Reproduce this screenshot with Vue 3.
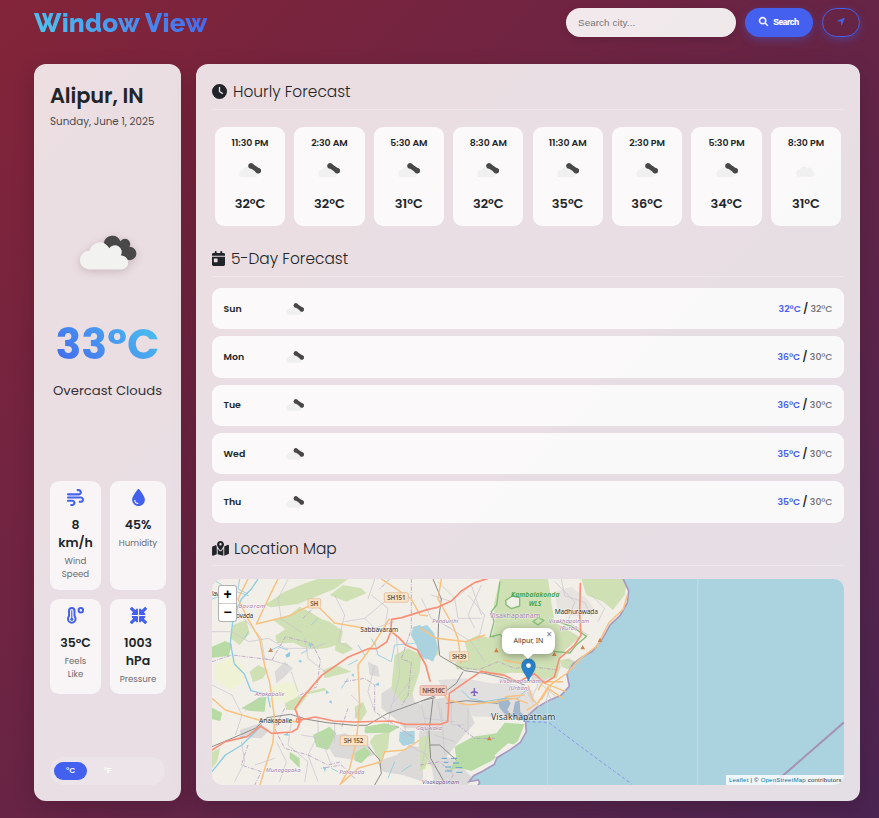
<script setup>
const hours = [
  { time: '11:30 PM', temp: '32°C' },
  { time: '2:30 AM', temp: '32°C' },
  { time: '5:30 AM', temp: '31°C' },
  { time: '8:30 AM', temp: '32°C' },
  { time: '11:30 AM', temp: '35°C' },
  { time: '2:30 PM', temp: '36°C' },
  { time: '5:30 PM', temp: '34°C' },
  { time: '8:30 PM', temp: '31°C', light: true },
]
const days = [
  { name: 'Sun', max: '32°C', min: '32°C' },
  { name: 'Mon', max: '36°C', min: '30°C' },
  { name: 'Tue', max: '36°C', min: '30°C' },
  { name: 'Wed', max: '35°C', min: '30°C' },
  { name: 'Thu', max: '35°C', min: '30°C' },
]
const quarter = [0, 90, 180, 270]
</script>

<template>
  <div class="page">
    <svg class="defs" width="0" height="0">
      <defs>
        <symbol id="cloud" viewBox="147 74 175 107">
          <path fill="#484848" d="M222 100a26 26 0 0 1 50-5a15 15 0 0 1 27 17a20 20 0 1 1-11 36l-60-40z" />
          <path fill="#f2f2f0" d="M176 180a28 28 0 1 1 3-56a31 31 0 0 1 59-7a20 20 0 0 1 35 21a21 21 0 1 1 3 42z" />
        </symbol>
        <symbol id="minicloud" viewBox="147 74 175 115">
          <path fill="#f0f0f0" d="M176 188a28 28 0 1 1 3-56a31 31 0 0 1 59-7a20 20 0 0 1 35 21a21 21 0 1 1 3 42z" />
          <path fill="none" stroke="#484848" stroke-width="38" stroke-linecap="round" d="M243 95l58 41" />
          <circle cx="243" cy="97" r="22" fill="#484848" />
          <circle cx="300" cy="136" r="22" fill="#484848" />
        </symbol>
        <symbol id="lightcloud" viewBox="147 88 151 93">
          <path fill="#f0f0f0" d="M176 180a28 28 0 1 1 3-56a31 31 0 0 1 59-7a20 20 0 0 1 35 21a21 21 0 1 1 3 42z" />
        </symbol>
      </defs>
    </svg>

    <header class="header">
      <h1 class="logo">Window View</h1>
      <div class="search">
        <input class="search-input" type="text" placeholder="Search city..." />
        <button class="btn btn-primary">
          <svg class="i-search" viewBox="0 0 512 512"><path fill="currentColor" stroke="currentColor" stroke-width="24" d="M416 208c0 45.9-14.9 88.3-40 122.7L502.6 457.4c12.5 12.5 12.5 32.8 0 45.3s-32.8 12.5-45.3 0L330.7 376c-34.4 25.2-76.8 40-122.7 40C93.1 416 0 322.9 0 208S93.1 0 208 0S416 93.1 416 208zM208 352a144 144 0 1 0 0-288 144 144 0 1 0 0 288z" /></svg>
          Search
        </button>
        <button class="btn btn-outline">
          <svg class="i-arrow" viewBox="0 0 448 512"><path fill="currentColor" d="M429.6 92.1c4.9-11.9 2.1-25.6-7-34.7s-22.8-11.9-34.7-7l-352 144c-14.2 5.8-22.2 20.8-19.3 35.8s16.1 25.8 31.4 25.8H224V432c0 15.3 10.8 28.4 25.8 31.4s30-5.1 35.8-19.3l144-352z" /></svg>
        </button>
      </div>
    </header>

    <main class="main">
      <aside class="card current">
        <div>
          <h2 class="city">Alipur, IN</h2>
          <div class="date">Sunday, June 1, 2025</div>
        </div>
        <div class="now">
          <svg class="big-icon"><use href="#cloud" /></svg>
          <div class="temp">33°C</div>
          <div class="desc">Overcast Clouds</div>
        </div>
        <div class="details">
          <div class="detail">
            <svg viewBox="0 0 512 512"><path fill="currentColor" d="M288 32c0 17.7 14.3 32 32 32h32c17.7 0 32 14.3 32 32s-14.3 32-32 32H32c-17.7 0-32 14.3-32 32s14.3 32 32 32H352c53 0 96-43 96-96s-43-96-96-96H320c-17.7 0-32 14.3-32 32zm64 352c0 17.7 14.3 32 32 32h32c53 0 96-43 96-96s-43-96-96-96H32c-17.7 0-32 14.3-32 32s14.3 32 32 32H416c17.7 0 32 14.3 32 32s-14.3 32-32 32H384c-17.7 0-32 14.3-32 32zM128 512h32c53 0 96-43 96-96s-43-96-96-96H32c-17.7 0-32 14.3-32 32s14.3 32 32 32H160c17.7 0 32 14.3 32 32s-14.3 32-32 32H128c-17.7 0-32 14.3-32 32s14.3 32 32 32z" /></svg>
            <strong>8<br />km/h</strong>
            <span>Wind<br />Speed</span>
          </div>
          <div class="detail">
            <svg viewBox="-64 0 512 512"><path fill="currentColor" d="M192 512C86 512 0 426 0 320C0 228.8 130.2 57.7 166.6 11.7C172.6 4.2 181.5 0 191.1 0h1.8c9.6 0 18.5 4.2 24.5 11.7C253.8 57.7 384 228.8 384 320c0 106-86 192-192 192zM96 336c0-8.8-7.2-16-16-16s-16 7.2-16 16c0 61.9 50.1 112 112 112c8.8 0 16-7.2 16-16s-7.2-16-16-16c-44.2 0-80-35.8-80-80z" /></svg>
            <strong>45%</strong>
            <span>Humidity</span>
          </div>
          <div class="detail">
            <svg viewBox="0 0 512 512" fill="none" stroke="currentColor">
              <path stroke-width="60" d="M62 112a82 82 0 0 1 164 0v166c20 24 32 50 32 80a114 114 0 1 1-228 0c0-30 12-56 32-80z" />
              <path stroke-width="34" stroke-linecap="round" d="M144 112v240" />
              <circle cx="144" cy="368" r="46" fill="currentColor" stroke="none" />
              <circle cx="416" cy="96" r="66" stroke-width="60" />
            </svg>
            <strong>35°C</strong>
            <span>Feels<br />Like</span>
          </div>
          <div class="detail">
            <svg viewBox="0 0 512 512"><path v-for="a in quarter" :key="a" :transform="`rotate(${a} 256 256)`" fill="currentColor" d="M439 7c9.4-9.4 24.6-9.4 33.9 0l32 32c9.4 9.4 9.4 24.6 0 33.9l-87 87 39 39c6.9 6.9 8.9 17.2 5.2 26.2s-12.5 14.8-22.2 14.8H296c-13.3 0-24-10.7-24-24V72c0-9.7 5.8-18.5 14.8-22.2s19.3-1.7 26.2 5.2l39 39L439 7z" /></svg>
            <strong>1003<br />hPa</strong>
            <span>Pressure</span>
          </div>
        </div>
        <div class="units">
          <button class="unit active">°C</button>
          <button class="unit">°F</button>
        </div>
      </aside>

      <section class="card forecast">
        <h3 class="title">
          <svg class="t16" viewBox="0 0 512 512"><path fill="currentColor" fill-rule="evenodd" d="M256 0a256 256 0 1 1 0 512A256 256 0 1 1 256 0zM232 120V256c0 8 4 15.5 10.7 20l96 64c11 7.4 25.9 4.4 33.3-6.7s4.4-25.9-6.7-33.3L280 243.2V120c0-13.3-10.7-24-24-24s-24 10.7-24 24z" /></svg>
          <span>Hourly Forecast</span>
        </h3>
        <div class="hours">
          <div v-for="h in hours" :key="h.time" class="hour">
            <div class="hour-time">{{ h.time }}</div>
            <div class="hour-icon">
              <svg v-if="h.light" class="hour-light"><use href="#lightcloud" /></svg>
              <svg v-else class="hour-cloud"><use href="#minicloud" /></svg>
            </div>
            <div class="hour-temp">{{ h.temp }}</div>
          </div>
        </div>

        <h3 class="title">
          <svg class="t14" viewBox="0 0 448 512"><path fill="currentColor" fill-rule="evenodd" d="M128 0c17.7 0 32 14.3 32 32V64H288V32c0-17.7 14.3-32 32-32s32 14.3 32 32V64h48c26.5 0 48 21.5 48 48v48H0V112C0 85.5 21.5 64 48 64H96V32c0-17.7 14.3-32 32-32zM0 192H448V464c0 26.5-21.5 48-48 48H48c-26.5 0-48-21.5-48-48V192zm80 64c-8.8 0-16 7.2-16 16v96c0 8.8 7.2 16 16 16h96c8.8 0 16-7.2 16-16V272c0-8.8-7.2-16-16-16H80z" /></svg>
          <span>5-Day Forecast</span>
        </h3>
        <div class="days">
          <div v-for="d in days" :key="d.name" class="day">
            <span class="day-name">{{ d.name }}</span>
            <svg class="day-cloud"><use href="#minicloud" /></svg>
            <span class="day-temps"><b>{{ d.max }}</b><em>/</em><i>{{ d.min }}</i></span>
          </div>
        </div>

        <h3 class="title title-map">
          <svg class="t17" viewBox="0 0 576 512"><path fill="currentColor" fill-rule="evenodd" d="M408 120c0 54.6-73.1 151.9-105.2 192c-7.7 9.6-22 9.6-29.6 0C241.1 271.9 168 174.6 168 120C168 53.7 221.7 0 288 0s120 53.7 120 120zm8 80.4c3.5-6.9 6.7-13.8 9.6-20.6c.5-1.2 1-2.5 1.5-3.7l116-46.4C558.9 123.4 576 135 576 152V422.8c0 9.8-6 18.6-15.1 22.3L416 503V200.4zM137.6 138.3c2.4 14.1 7.2 28.3 12.8 41.5c2.9 6.8 6.1 13.7 9.6 20.6V451.8L32.9 502.7C17.1 509 0 497.4 0 480.4V209.6c0-9.8 6-18.6 15.1-22.3l122.6-49zM327.8 332c13.9-17.4 35.7-45.7 56.2-77V504.3L192 449.4V255c20.5 31.3 42.3 59.6 56.2 77c20.5 25.6 59.1 25.6 79.6 0zM288 152a40 40 0 1 0 0-80 40 40 0 1 0 0 80z" /></svg>
          <span>Location Map</span>
        </h3>
        <div class="map">
          <svg class="tiles" viewBox="12 12 1896 618" preserveAspectRatio="none">
            <rect x="12" y="12" width="1896" height="618" fill="#f2efe9" />
            <!-- farmland and scrub -->
            <g fill="#f0f2d6">
              <path d="M20 270l50-25 40 30-5 45-35 25-50-30z" />
              <path d="M190 335l50-15 35 10-10 35-35 20-38-15z" />
              <path d="M640 500l40-20 20 40-30 60-30 10z" />
            </g>
            <!-- built-up areas -->
            <g fill="#dbdad8">
              <path d="M520 355l40-25 50 10 10 40 30 10 40 50-20 20-80 0-30-30-40-30z" />
              <path d="M360 485l50-10 70 30 20 35-60 15-60-10-20-30z" />
              <path d="M640 380l80-15 60 30 20 50-40 45-40 50-30 50-60-50z" />
              <path d="M505 560l60-20 40-30 40 10v100l-60-20-60-10z" />
              <path d="M665 540l70 10 60 60-15 20h-100z" />
              <path d="M200 290l30-30 25 20-30 30-20 15z" />
              <path d="M95 465l60-20 30 20-25 25-60-5z" />
              <path d="M480 260l30 15 5 30-30-5z" />
              <path d="M690 315l80-5 80 15 60 0 60 20 20 50 10 40-50 0-60-10-90 0-70-40z" opacity=".7" />
              <path d="M1040 50l50-15 50 40 20 30-40 20-70-10z" opacity=".5" />
              <path d="M975 290l50-5 5 20-30 20-30-10z" />
            </g>
            <!-- woodland -->
            <g fill="#cfe0b4">
              <path d="M170 90l60-40 60-25 40-13h90l-40 30-50 20-60 25-80 10z" />
              <path d="M195 135l50-15 30-25 30 15 35 22 25 8 40 28-8 38-40 13-35 4-40-8-25-12-50 2-5-22 30-20-15-12z" />
              <path d="M365 60l40-30 55 10 15 15-60 25z" />
              <path d="M75 150l40-15 10 40-30 35-28-20z" />
              <path d="M560 240l40-20 40 20-5 50-25 75-30 15-30-40z" />
              <path d="M125 290l25-20 30 15-15 25-30 12z" />
              <path d="M345 285l40-15 45 20-40 10-40 10z" />
              <path d="M230 385l40-20 30-5-35 45-30 0z" />
              <path d="M500 480l45-10-5 50-25 40-30-60z" />
              <path d="M385 205l30-2 20 20-30 15-25-12z" />
              <path d="M12 530l25-10-10 40-15 20z" />
              <path d="M440 395l25-15 12 30-20 30-15-15z" />
              <path d="M300 350l50-12 5 8-55 12z" />
              <path d="M875 12h75l70 0 10 70 10 60 60 35 15 10-50 45-10 20-60-15-40-20-50-15-58 0 15-60-5-50z" />
              <path d="M1120 12h138l-8 48-35 45-30-25-50-20z" />
              <path d="M740 265l40-25-10-40 40-20 60 15 60 10 60 20 60 25 8 25-12 35-40 0-40-15-60-2-40 8-60-15-60-3z" />
              <path d="M1055 255l30-5 20 18-25 15-20-8z" />
              <path d="M636 490l30-10 0 60-15 40-15 10z" />
              <path d="M655 210l30-5 10 30-20 15-20-15z" />
            </g>
            <g fill="#b8dba5">
              <path d="M12 215l40-17 20 10-10 35-50 5z" />
              <path d="M100 400l50-30 25-5-5 45-45-2z" />
              <path d="M12 398l30 15-5 25-25-5z" />
              <path d="M315 480l50-25 20 20-25 50-35-10z" />
              <path d="M440 535l30-20 20 20-30 30-20-8z" />
              <path d="M470 455l60-10 45 10-30 18-75 2z" />
              <path d="M245 530l30 20 0 30-30-30z" />
              <path d="M740 515l55-30 70-10 25-32 60 5-20 50-80 60-60 30-40-10-30 10 25-35z" />
            </g>
            <path fill="#f2efe9" d="M895 75l20-12 20 5 0 25-25 8-15-12zM860 540l40-35 25 5-30 25-30 18z" />
            <!-- sea -->
            <g transform="translate(636 0)">
              <path fill="#aad3df" stroke="#a99abf" stroke-width="5" d="M608 8l18 40-4 36-22 38-30 28-22 40-30 38-38 22-22 18-17 30 7 36-25 27-38 16-34 20-30 27-4 20 2 26-18 32-30 22-40 24-8 20-34 20-28 14-14 18 28-5 4 9-18 24H1290V-10z" />
              <path fill="#aad3df" d="M0 155l22-5 20 25 13 45-16 40-29-15-10-30z" />
              <path fill="#a3b7cc" d="M232 375l30-8 10 18-10 20 15 15 8-40 14-5 2 36 20 18-25 8-25-15-12 2-20-25z" />
              <path fill="none" stroke="#8d93ee" stroke-width="3" stroke-dasharray="10 7" d="M320 440l65 2 100 75 150 110" />
              <path stroke="#c8d6d8" stroke-width="3" d="M382 375v260" />
              <g stroke="#58a6d4" stroke-width="3"><path d="M65 550h16m12 0h18m-40 12h14m14 2h18m-42 12h18m14 2h20m-52 10h22m12 4h18" /></g>
            </g>
            <path stroke="#c3d8dd" stroke-width="4" d="M1469 12v618" />
            <path stroke="#a58bb0" stroke-width="6" opacity=".9" d="M1690 632l218-190" />
            <!-- streams and lakes -->
            <g fill="none" stroke="#8dcbe0" stroke-width="4" stroke-linejoin="round">
              <path d="M150 12l-20 30-30 30-25 60-8 70 12 65 30 30 20 50 50 12 8 38" />
              <path d="M12 590l40-50 50-30 60-60" />
              <path d="M12 12l50 30 60 20m-110 10l60-20M95 12l-5 30 30 15" stroke-width="2.5" />
              <path d="M500 200l10 40 40 20 10-50 60-5 30-20M470 240l-20-30" stroke-width="2.5" />
              <path d="M180 230l30-15 30 10m40 10l20-10M330 130l-20 20m-130 290l30 10m160 130l20 10m-280-400l10-20m370 20l10 20m-80 100l-20 30m20-70l30-15M560 560l-20 50m40-20l30-20" stroke-width="2.5" />
              <path d="M760 345l25 25 45 10 60-10 40 0 30-30" stroke-width="3" />
            </g>
            <g fill="#8dcbe0">
              <path d="M232 240l14-10v14l-10 4zM300 205l12 2-4 12zM270 258l10-4v10zM345 575l10 2-4 14zM362 380l8-4 2 10zM225 480l14-6 4 8zM430 300l6-6 2 12zM500 330l12-8 2 10zM355 345l8 8-10 4zM95 485l12-2-4 8z" />
            </g>
            <path fill="#aad3df" d="M575 470l45-3v38l-35 8-12-15zM616 155l20-5 20 25 13 45-14 34-22-14-8-30-17-30z" />
            <!-- minor roads -->
            <g fill="none" stroke="#c9c5cf" stroke-width="2.2" stroke-linejoin="round">
              <path d="M12 170l60 0 50 30 60-10 50 30 80 0 40-15M30 90l60 20 70 80 10 60 70 20M240 12l-30 60 10 60 60 40M290 190l10 60 50 40M380 60l30 60-20 80 40 20M12 330l60 30 30 60-20 60M200 350l-50 20-40 40M205 500l30 60-20 60M250 440l-10 70 60 50-10 60M100 500l10 60-30 60M330 430l0 50-30 60 30 80M380 440l0 60M490 60l50 40-10 60M565 180l10 120-20 80M500 270l-20 80 20 60M620 300l-70 90-10 60M590 450l10 60 60 30M640 390l20 90-20 100M700 400l10 140M730 380l0 70 40 0M670 60l60 20 60-50 30 90M710 150l80 50 40 60M780 60l50 60-20 80M1040 20l60 60-20 60 60 40M940 330l50 60 0 40M990 320l60 50M1030 330l-20 60M410 140l60-10 60-50M500 12l-20 60M250 290l20 60M140 570l60-20" />
              <path d="M690 20l50 50 10 60 70 0M640 70l30 60 60 30M820 30l-40 90 20 40M1060 12l10 50 60 20 20 40M1150 60l40 40-20 40M650 540l50 60M680 480l60 20M650 430l90 10M690 380l10 60M780 400l0 80M1015 345l30 60M1000 400l-40-40M960 290l30 40-20 40M1075 255l50 10M1080 275l40 8M470 130l30 30 60-20M430 360l30 30-20 40M280 480l60 10 30 80" />
            </g>
            <g fill="none" stroke="#b9a0c4" stroke-width="2.5" stroke-dasharray="12 4 3 4">
              <path d="M12 260l60-20 120 15 40-70 80 20 25 50-10 80-60 30M610 12v150l-30 90 30 10-10 100-20 30M230 400l-30 60 30 60 70 20 60 30 40-10M120 510l-20 60 60 20-20 40M410 320l60-10 30 20 0 80 60 40 60 40M420 400l-20 60M285 130l30-30M545 12l-30 30M440 610l-40-40-60 10" />
              <path d="M636 570l60-10 40 40-20 30M750 450l50 40 60 0M750 275l60 10 60-25 50 20 50-5 80 10M860 190l-12-10" />
            </g>
            <!-- reserve outline -->
            <path fill="none" stroke="#86bd78" stroke-width="4" stroke-linejoin="round" d="M876 20l-10 70-16 20 8 30-12 46 30-8 15 16 45 5 30 12 40 15 80 8 15-20 35-30-45-30-45-15M893 76l20-13 22 5 0 25-25 8-16-12zM975 140l15-12 18 8-18 14z" />
            <!-- rail -->
            <g fill="none" stroke="#8c8c8c" stroke-width="3" stroke-linejoin="round">
              <path d="M12 515l60-25 70-30 35-32 70-10 50 15 60 10 80 8h40l60-35 110-40 35-8" />
              <path d="M675 12l25 60-8 60-2 60 5 50 60 35 15 10 60 8 60 15 60 20M480 515l35 40 5 40-20 35M640 378l40-15M715 385l60-8 95 8M675 370l-12 100 5 80 40 70M665 510l30 0 50 45M765 290l-20 35-40 30" />
            </g>
            <!-- secondary roads -->
            <g fill="none" stroke="#f8c280" stroke-width="4.5" stroke-linejoin="round">
              <path d="M210 12l-20 40-45 95 100-25 75-38 60 60 105 18M120 12l-30 60 30 60 35 60 15 80 15 50 15 110-5 70-25 80-20 70M12 370l40 35 100 30 120 5M545 130l-50 80-45 60 5 120-10 110-20 80-35 60M520 12l30 20 60 40 26 48 24 2M400 625l50-45 70-20 10-30 60-5 45-30M700 12l-10 60 45 80 15 40 10 75M636 160l50 30 90 10 55-20M700 345l20 30 60 15 80-10 60-10 40 15" />
              <path d="M1258 60l-12 42-44 42-34 68-55 42-35 40-50 35-40 55-32 22M990 345l15-25 60 0M960 330l15 50M1000 375l20-35 45 30M990 385l30-50M1075 350l-65-25M890 365l60-5M885 255l50 10 30-10" />
            </g>
            <!-- trunk roads -->
            <g fill="none" stroke="#fa8f78" stroke-width="5" stroke-linejoin="round">
              <path d="M12 525l40-25 65-15 40-32 34 22 60-4 17-10 6-15-3-20-10-25 20-30 60-70 80-55 60-25h25l30-20 12-30 3-38 30-5 80-25 24-5 45-20 30-30 40-25 40-13" />
              <path d="M272 436l50-10 55 12 60 3 115-3 40 10h105l22-8 5-85 60-42 35-24 70 12 40 20 50-25 30 28 30-18 15-55 45-40 20-30-4-60 2-98M545 165l30 25 18 20 35 15 25 45 14 50" />
            </g>
            <circle cx="272" cy="436" r="7" fill="none" stroke="#fa8f78" stroke-width="4" />
            <g fill="#d08450"><path d="M181 231l7-13 7 13zM858 232l7-13 7 13zM1117 223l7-13 7 13zM1169 201l7-13 7 13zM1032 243l7-13 7 13zM837 496l7-13 7 13z" /></g>
            <path fill="#8064c8" d="M797 339h4v8l9 5v4l-9-3v6l3 4h-10l3-4v-6l-9 3v-4l9-5z" />
            <!-- route shields -->
            <g stroke="#dfb595" stroke-width="2" fill="#f9e3c4">
              <rect x="300" y="71" width="38" height="28" rx="4" /><rect x="529" y="53" width="72" height="29" rx="4" />
              <rect x="397" y="482" width="82" height="30" rx="4" /><rect x="725" y="230" width="57" height="28" rx="4" />
              <rect x="636" y="332" width="80" height="29" rx="4" fill="#f3cbbd" stroke="#d69b8d" />
            </g>
            <g class="roadname">
              <text x="307" y="92" textLength="24">SH</text><text x="538" y="75" textLength="55">SH151</text>
              <text x="407" y="504" textLength="59">SH 152</text><text x="732" y="251" textLength="43">SH39</text>
              <text x="643" y="354" textLength="68">NH516C</text>
            </g>
            <g class="place">
              <text x="457" y="170" textLength="114">Sabbavaram</text><text x="153" y="444" textLength="100">Anakapalle</text>
              <text x="84" y="130" textLength="52">ovada</text><text x="12" y="64" textLength="22">lav</text>
              <text x="1040" y="117" textLength="130">Madhurawada</text>
              <text class="large" x="849" y="434" textLength="193">Visakhapatnam</text>
            </g>
            <g class="area">
              <text x="80" y="98" textLength="92">odavaram</text><text x="141" y="363" textLength="88">Anakapalle</text>
              <text x="173" y="590" textLength="105">Munagapaka</text><text x="394" y="596" textLength="75">Paravada</text>
              <text x="673" y="145" textLength="78">Pendurthi</text><text x="624" y="466" textLength="78">Gajuwaka</text>
              <text x="1022" y="143" textLength="122">Visakhapatnam</text><text x="1056" y="164" textLength="52">(Rural)</text>
              <text x="873" y="325" textLength="125">Visakhapatnam</text><text x="902" y="345" textLength="62">(Urban)</text>
              <text x="642" y="626" textLength="112" class="dark">Visakapatnam</text>
              <text class="upright" x="845" y="129" textLength="152">Visakhapatnam</text>
            </g>
            <g class="reserve"><text x="909" y="66" textLength="145">Kambalakonda</text><text x="962" y="92" textLength="38">WLS</text></g>
          </svg>
          <svg class="pin" viewBox="0 0 44 68">
            <path fill="#2a81cb" stroke="#2374ae" stroke-width="2" d="M22 66C18 51 2 39 2 21a20 20 0 0 1 40 0c0 18-16 30-20 45z" />
            <circle cx="22" cy="21" r="7" fill="#fff" />
          </svg>
          <div class="popup">Alipur, IN<span class="close">×</span></div>
          <div class="zoom"><span>+</span><span>−</span></div>
          <div class="credit"><a>Leaflet</a> | © <a>OpenStreetMap</a> contributors</div>
        </div>
      </section>
    </main>
  </div>
</template>

<style>
body { margin: 0; }
</style>

<style scoped>
* { box-sizing: border-box; }
.page {
  width: 879px;
  height: 818px;
  padding: 8px 19px 17px 34px;
  overflow: hidden;
  background: linear-gradient(135deg, #832439 0%, #4b2451 100%);
  font-family: Poppins, Inter, "Noto Sans", sans-serif;
  color: #212529;
  display: flex;
  flex-direction: column;
}
.defs { position: absolute; }
h1, h2, h3 { margin: 0; }
button { border: 0; padding: 0; font-family: "Liberation Sans", sans-serif; }
.header { height: 56px; flex: none; display: flex; justify-content: space-between; align-items: flex-start; }
.logo {
  font: 800 26px/30px Raleway, Lato, sans-serif;
  letter-spacing: 0.2px;
  background: linear-gradient(45deg, #4cc9f0, #4361ee);
  -webkit-background-clip: text;
  background-clip: text;
  color: transparent;
}
.search { display: flex; gap: 9px; }
.search-input {
  width: 170px; height: 29px; border: 0; border-radius: 15px; padding: 0 12px;
  background: rgba(255, 255, 255, .9);
  font: 9.8px "Liberation Sans", sans-serif; letter-spacing: .1px;
  box-shadow: 0 3px 8px rgba(0, 0, 0, .1);
}
.search-input::placeholder { color: #757575; }
.btn { height: 29px; border-radius: 15px; display: flex; align-items: center; justify-content: center; box-shadow: 0 3px 8px rgba(67, 97, 238, .35); padding-bottom: 2px; }
.btn-primary { width: 68px; background: #4361ee; color: #fff; font-size: 8.5px; font-weight: 700; letter-spacing: -.5px; gap: 5px; -webkit-text-stroke: .2px #fff; }
.btn-outline { width: 38px; background: transparent; border: 1px solid #4361ee; color: #4361ee; }
.i-search { width: 9px; height: 9px; margin-top: -1px; overflow: visible; }
.i-arrow { width: 8px; height: 9px; margin-top: -1px; }

.main { flex: 1; min-height: 0; display: grid; grid-template-columns: 147px 664px; gap: 15px; }
.card { background: rgba(255, 255, 255, .85); border-radius: 12px; box-shadow: 0 6px 22px rgba(0, 0, 0, .16); padding: 16px; }
.current { display: flex; flex-direction: column; }
.city { font-size: 20.9px; font-weight: 600; line-height: 32px; letter-spacing: -.1px; white-space: nowrap; }
.date { margin-top: 1px; font-size: 10.3px; line-height: 18px; color: #4d4a50; white-space: nowrap; }
.now { margin-top: 103px; text-align: center; display: flex; flex-direction: column; align-items: center; }
.big-icon { width: 58px; height: 36px; filter: drop-shadow(0 2px 4px rgba(60, 20, 40, .2)); }
.temp {
  margin-top: 44px; font-size: 42.7px; line-height: 60px; font-weight: 700;
  background: linear-gradient(45deg, #4361ee, #4cc9f0);
  -webkit-background-clip: text;
  background-clip: text;
  color: transparent;
}
.desc { margin-top: 6px; font-size: 13.2px; line-height: 22px; white-space: nowrap; color: #35323a; }
.details { margin-top: 79px; display: grid; grid-template-columns: 51px 56px; grid-template-rows: 109px 95px; gap: 9px; }
.detail { background: rgba(255, 255, 255, .7); border-radius: 9px; padding-top: 8px; display: flex; flex-direction: column; align-items: center; text-align: center; }
.detail svg { width: 17px; height: 17px; color: #4361ee; }
.detail strong { margin-top: 10px; font-size: 12.5px; line-height: 18px; font-weight: 600; }
.detail span { margin-top: 3px; font-size: 8.6px; line-height: 13px; color: #6b686e; }
.units { margin-top: 63px; height: 28px; padding: 5px 4px; border-radius: 14px; background: rgba(255, 255, 255, .2); display: flex; gap: 4px; }
.unit { width: 33px; height: 18px; border-radius: 9px; background: transparent; color: #fff; font-size: 8px; font-weight: 700; padding-bottom: 1px; }
.active { background: #4361ee; }

.forecast { display: flex; flex-direction: column; padding-top: 12px; }
.title { height: 34px; flex: none; padding-bottom: 2px; border-bottom: 1px solid rgba(255, 255, 255, .3); display: flex; align-items: center; gap: 6px; font-size: 15.4px; font-weight: 300; }
.title-map { gap: 5px; padding-bottom: 0; }
.title svg { height: 15px; }
.t16 { width: 15px; }
.t14 { width: 13px; }
.t17 { width: 17px; }
.hours { margin: 17px 3px 17px; display: grid; grid-template-columns: repeat(8, 1fr); gap: 9.3px; }
.hour { height: 99px; border-radius: 9px; background: rgba(255, 255, 255, .8); display: flex; flex-direction: column; align-items: center; padding-top: 8px; }
.hour-time { font-size: 9.4px; line-height: 15px; font-weight: 600; white-space: nowrap; letter-spacing: -.05px; }
.hour-icon { height: 44px; display: flex; align-items: center; justify-content: center; padding-bottom: 3px; }
.hour-cloud { width: 22px; height: 14.5px; }
.hour-light { width: 19px; height: 12px; }
.hour-temp { font-size: 12.9px; line-height: 20px; font-weight: 600; }
.days { margin: 11px 0 9px; display: grid; grid-template-rows: repeat(5, 41.4px); gap: 6.9px; }
.day { border-radius: 9px; background: rgba(255, 255, 255, .8); display: flex; align-items: center; padding: 0 11.5px; }
.day-name { width: 62.5px; font-size: 9.4px; font-weight: 600; }
.day-cloud { width: 18px; height: 12px; }
.day-temps { margin-left: auto; display: flex; align-items: center; font-size: 9.3px; font-weight: 600; }
.day-temps b { color: #4361ee; font-weight: 600; }
.day-temps em { font-style: normal; margin: 0 2.4px; font-size: 10px; }
.day-temps i { font-style: normal; font-weight: 500; color: #6c6a70; }

.map { position: relative; flex: none; height: 206px; margin-top: 13px; border-radius: 10px; overflow: hidden; }
.tiles { display: block; width: 632px; height: 206px; }
.tiles text { font-family: "Noto Sans", sans-serif; }
.roadname text { font-size: 19px; font-weight: 600; fill: #71513b; }
.place text { font-size: 20px; fill: #333; paint-order: stroke; stroke: rgba(255, 255, 255, .6); stroke-width: 3px; }
.place .large { font-size: 26px; }
.area text { font-size: 18px; font-style: italic; fill: #a87fae; paint-order: stroke; stroke: rgba(255, 255, 255, .6); stroke-width: 3px; }
.area .upright { font-style: normal; font-size: 21px; }
.area .dark { fill: #77558a; }
.reserve text { font-size: 20px; font-style: italic; font-weight: 600; fill: #3f9e41; }
.pin { position: absolute; left: 309px; top: 79px; width: 15px; height: 24px; }
.popup {
  position: absolute; left: 290px; top: 49px; width: 53px; height: 26px; border-radius: 8px;
  background: #fff; box-shadow: 0 2px 8px rgba(0, 0, 0, .35); text-align: center;
  font: 7px/25px "Noto Sans", sans-serif; color: #333;
}
.popup::after { content: ""; position: absolute; left: 20px; top: 25px; border: 6px solid transparent; border-top-color: #fff; border-bottom: 0; }
.close { position: absolute; right: 3px; top: 0; font: 10px/12px "Noto Sans", sans-serif; color: #757575; }
.zoom { position: absolute; left: 6px; top: 6px; width: 19px; border: 1px solid rgba(0, 0, 0, .3); border-radius: 3px; overflow: hidden; background: #fff; }
.zoom span { display: block; height: 17px; font: 700 14px/17px "Liberation Sans", sans-serif; color: #000; text-align: center; }
.zoom span + span { border-top: 1px solid #ccc; height: 18px; }
.credit { position: absolute; right: 0; bottom: 0; width: 118px; height: 10px; padding-left: 3px; background: rgba(255, 255, 255, .8); font: 6px/10px "Liberation Sans", sans-serif; letter-spacing: .22px; color: #333; white-space: nowrap; }
.credit a { color: #0078a8; }
</style>
